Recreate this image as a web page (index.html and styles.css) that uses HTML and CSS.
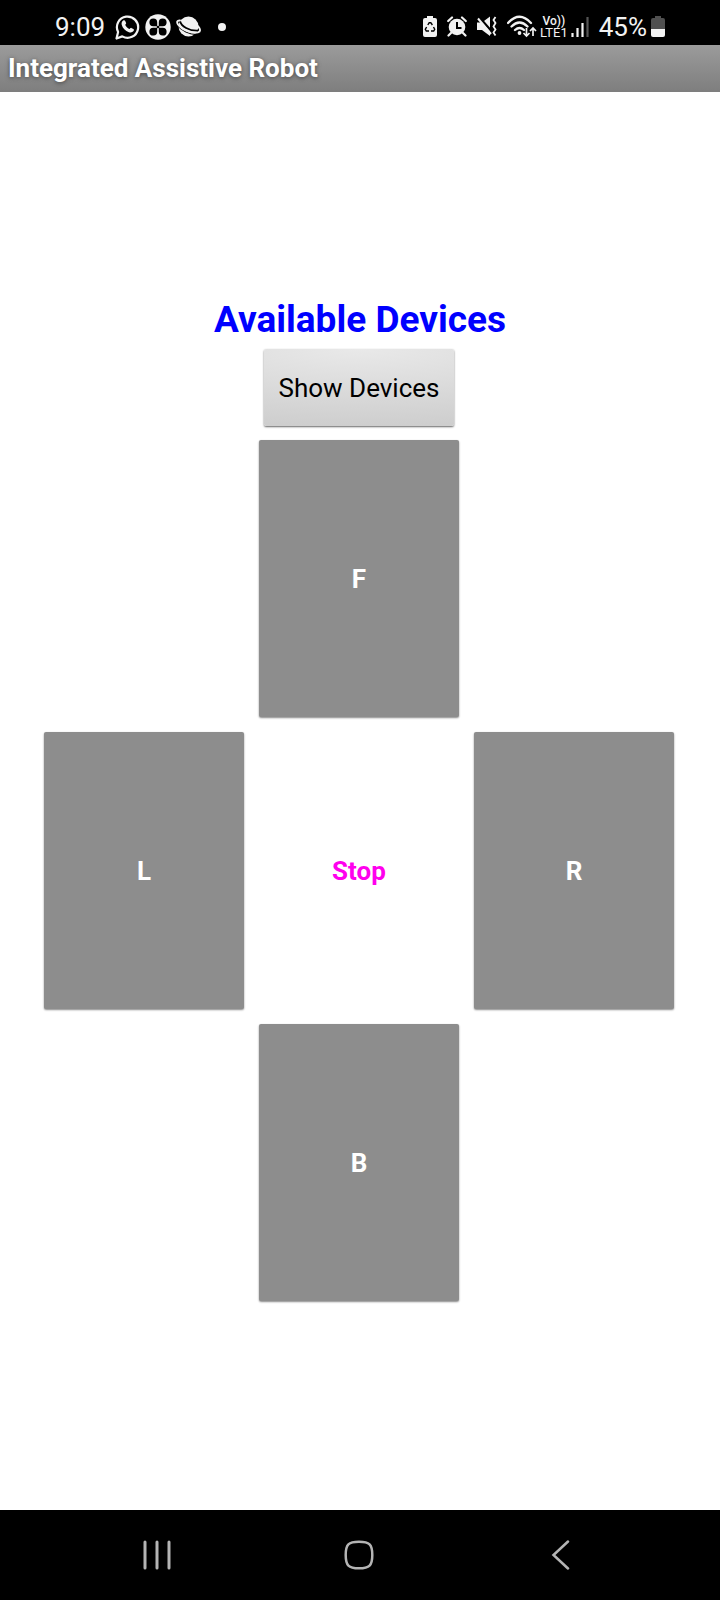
FILE: index.html
```html
<!DOCTYPE html>
<html lang="en">
<head>
<meta charset="utf-8">
<meta name="viewport" content="width=device-width, initial-scale=1">
<title>Integrated Assistive Robot</title>
<link rel="stylesheet" href="styles.css">
</head>
<body>
<div class="status">
  <div class="status-group">
    <span class="clock">9:09</span>
    <svg class="notice" width="25" height="26" viewBox="0 0 25 26" aria-hidden="true">
      <path d="M1.500 24.500 3.100 18A10.600 10.600 0 1 1 7.300 22.400Z" fill="none" stroke="#f2f2f2" stroke-width="2.200" stroke-linejoin="round"/>
      <path d="M8.200 6.600c.8-.6 1.600-.4 2 .4l.9 2c.3.7-.9 1.600-.8 2 .8 1.800 2.200 3.100 4 3.900.6.2 1.300-1.300 2-1l2.100 1c.8.4.6 1.500.1 2.200-1 1.400-2.700 1.700-4.600 1.100-3.600-1.200-6.300-3.800-7.200-7.400-.4-1.700.2-3.300 1.500-4.200Z" fill="#f2f2f2"/>
    </svg>
    <svg class="notice" width="26" height="26" viewBox="0 0 26 26" aria-hidden="true">
      <circle cx="13" cy="13" r="12.700" fill="#f2f2f2"/>
      <g fill="#000">
        <path d="M12.200 12.200H8.400A3.900 3.900 0 1 1 12.200 8.400Z"/>
        <path d="M13.800 12.200V8.400A3.900 3.900 0 1 1 17.600 12.200Z"/>
        <path d="M12.200 13.800V17.600A3.900 3.900 0 1 1 8.400 13.800Z"/>
        <path d="M13.800 13.800H17.600A3.900 3.900 0 1 1 13.800 17.600Z"/>
        <circle cx="13" cy="13" r="1.300"/>
      </g>
    </svg>
    <svg class="notice" width="26" height="22" viewBox="0 0 26 22" aria-hidden="true">
      <circle cx="12.500" cy="10.500" r="10" fill="#f2f2f2"/>
      <path d="M4 5c1 5 9 10.500 19 9.500" fill="none" stroke="#000" stroke-width="1.800"/>
      <path d="M1.500 9.500C5 14.500 14 19 21 18.300" fill="none" stroke="#000" stroke-width="1.200"/>
      <path d="M4 4.500C1 4.200.5 6 2 8.500c4 5.500 14 9.300 20 7.800 3-.8 2.400-3.300.2-6" fill="none" stroke="#f2f2f2" stroke-width="1.900" stroke-linecap="round"/>
    </svg>
    <span class="dot"></span>
  </div>
  <div class="status-group">
    <svg width="14" height="21" viewBox="0 0 14 21" aria-hidden="true">
      <path d="M4 0h6v2h2q2 0 2 2v15q0 2-2 2H2q-2 0-2-2V4q0-2 2-2h2Z" fill="#f2f2f2"/>
      <path d="m4.800 9 1.400-2.300h1.600L9.400 9M10.500 11l1.200 2.300-1 1.700H8M6 15H3.300l-1-1.700L3.600 11" fill="none" stroke="#000" stroke-width="1.400"/>
    </svg>
    <svg width="20" height="21" viewBox="0 0 20 21" aria-hidden="true">
      <circle cx="10" cy="11" r="8.300" fill="#f2f2f2"/>
      <path d="M1.200 5 5 1.500M18.800 5 15 1.500M4 17l-2.500 2.500M16 17l2.500 2.500" stroke="#f2f2f2" stroke-width="2.200" stroke-linecap="round"/>
      <path d="M10 6v6h4.500" fill="none" stroke="#000" stroke-width="2"/>
    </svg>
    <svg width="20" height="21" viewBox="0 0 20 21" aria-hidden="true">
      <path d="M0 6.500h5l8-6v19.500l-8-6H0Z" fill="#f2f2f2"/>
      <path d="M2 1 16 17" stroke="#000" stroke-width="2.500"/>
      <path d="M1 2.500 14 18" stroke="#f2f2f2" stroke-width="2"/>
      <path d="m18.500 1-2 3 2 3-2 3.500 2 3-2 3 2 3" fill="none" stroke="#f2f2f2" stroke-width="1.800"/>
    </svg>
    <svg width="30" height="23" viewBox="0 0 30 23" aria-hidden="true">
      <path d="M1 8Q12.500-4.500 24 8M4.500 11.500q8-8 16 0M8 15q4.500-4 9 0" fill="none" stroke="#f2f2f2" stroke-width="2.300" stroke-linecap="round"/>
      <circle cx="12.500" cy="18" r="1.900" fill="#f2f2f2"/>
      <path d="M19.500 13v8m-3-3 3 3 3-3M26 21v-8m-3 3 3-3 3 3" fill="none" stroke="#f2f2f2" stroke-width="1.700"/>
    </svg>
    <span class="network"><span class="volte">Vo))</span><span>LTE1</span></span>
    <svg width="18" height="20" viewBox="0 0 18 20" aria-hidden="true">
      <path d="M1.500 16v4M6.500 11v9M11.500 6v14" stroke="#f2f2f2" stroke-width="2.200"/>
      <path d="M16.500 0v20" stroke="#555" stroke-width="2.200"/>
    </svg>
    <span class="percent">45%</span>
    <svg class="battery" width="14" height="21" viewBox="0 0 14 21" aria-hidden="true">
      <path d="M4 0h6v2h2q2 0 2 2v9H0V4q0-2 2-2h2Z" fill="#505050"/>
      <path d="M0 13h14v6q0 2-2 2H2q-2 0-2-2Z" fill="#f2f2f2"/>
    </svg>
  </div>
</div>
<header class="titlebar"><h1 class="title">Integrated Assistive Robot</h1></header>
<main class="screen">
  <h2 class="heading">Available Devices</h2>
  <div class="controls">
    <button class="show" type="button">Show Devices</button>
    <div class="pad">
      <button class="key forward" type="button">F</button>
      <button class="key left" type="button">L</button>
      <button class="key stop" type="button">Stop</button>
      <button class="key right" type="button">R</button>
      <button class="key back" type="button">B</button>
    </div>
  </div>
</main>
<nav class="navbar">
  <button class="nav" type="button" aria-label="Recent apps">
    <svg width="30" height="30" viewBox="0 0 30 30"><path d="M3 2v26M15 2v26M27 2v26" stroke="#b4b4b4" stroke-width="3" stroke-linecap="round"/></svg>
  </button>
  <button class="nav" type="button" aria-label="Home">
    <svg width="30" height="30" viewBox="0 0 30 30"><path d="M15 1.700C25.500 1.700 28.300 4.500 28.300 15S25.500 28.300 15 28.300 1.700 25.500 1.700 15 4.500 1.700 15 1.700Z" fill="none" stroke="#b4b4b4" stroke-width="2.500"/></svg>
  </button>
  <button class="nav" type="button" aria-label="Back">
    <svg width="30" height="30" viewBox="0 0 30 30"><path d="M22 1.500 7.500 15 22 28.500" fill="none" stroke="#b4b4b4" stroke-width="2.500" stroke-linecap="round"/></svg>
  </button>
</nav>
</body>
</html>
```
FILE: styles.css
```css
* { box-sizing: border-box; }
body {
  margin: 0;
  min-height: 100vh;
  display: flex;
  flex-direction: column;
  background: #fff;
  font-family: Roboto, "Liberation Sans", sans-serif;
}
button {
  font: inherit;
  border: 0;
  padding: 0;
  cursor: pointer;
}
svg { display: block; flex: none; }
.status {
  display: flex;
  justify-content: space-between;
  height: 45px;
  padding: 8px 55px 0;
  background: #000;
  color: #f2f2f2;
}
.status-group {
  display: flex;
  align-items: center;
  gap: 10px;
}
.clock { font-size: 26px; line-height: 36px; }
.notice + .notice { margin-left: -5px; }
.dot {
  width: 8px;
  height: 8px;
  margin-left: 6px;
  border-radius: 50%;
  background: #f2f2f2;
}
.network {
  display: flex;
  flex-direction: column;
  align-items: center;
  margin: 0 -7px;
  font-size: 13px;
  line-height: 11px;
}
.volte { font-size: 12px; font-weight: 500; }
.percent { font-size: 26px; line-height: 36px; }
.battery { margin-left: -6px; }
.titlebar {
  height: 47px;
  padding: 0 8px;
  background: linear-gradient(#9b9b9b, #7e7e7e);
}
.title {
  margin: 0;
  font-size: 26px;
  line-height: 47px;
  font-weight: 700;
  color: #fff;
  text-shadow: 0 1px 4px #444;
}
.screen {
  flex: 1;
  display: flex;
  flex-direction: column;
  align-items: center;
  padding-top: 204px;
}
.heading {
  margin: 0;
  font-size: 37px;
  line-height: 47px;
  font-weight: 700;
  color: #00f;
}
.controls {
  display: flex;
  flex-direction: column;
  align-items: center;
  width: 100%;
  padding: 6px 46px 0 44px;
}
.show {
  width: 190px;
  height: 77px;
  border-radius: 2px;
  background: radial-gradient(ellipse 200% 100% at 50% 0, #e9e9e9, #cecece);
  box-shadow: 0 1px 2px #666;
  font-size: 26px;
  color: #000;
}
.pad {
  display: grid;
  grid-template-columns: repeat(3, minmax(0, 200px));
  grid-template-areas: ". f ." "l s r" ". b .";
  justify-content: center;
  gap: 15px;
  width: 100%;
  margin-top: 14px;
}
.key {
  aspect-ratio: 200 / 277;
  border-radius: 2px;
  background: #8d8d8d;
  box-shadow: 0 1px 2px #888;
  font-size: 26px;
  font-weight: 700;
  color: #fff;
}
.forward { grid-area: f; }
.left { grid-area: l; }
.right { grid-area: r; }
.back { grid-area: b; }
.stop {
  grid-area: s;
  background: none;
  box-shadow: none;
  color: #f0e;
}
.navbar {
  display: flex;
  justify-content: center;
  gap: 172px;
  height: 90px;
  padding-right: 3px;
  background: #000;
}
.nav {
  display: flex;
  justify-content: center;
  align-items: center;
  width: 30px;
  background: none;
}
```
